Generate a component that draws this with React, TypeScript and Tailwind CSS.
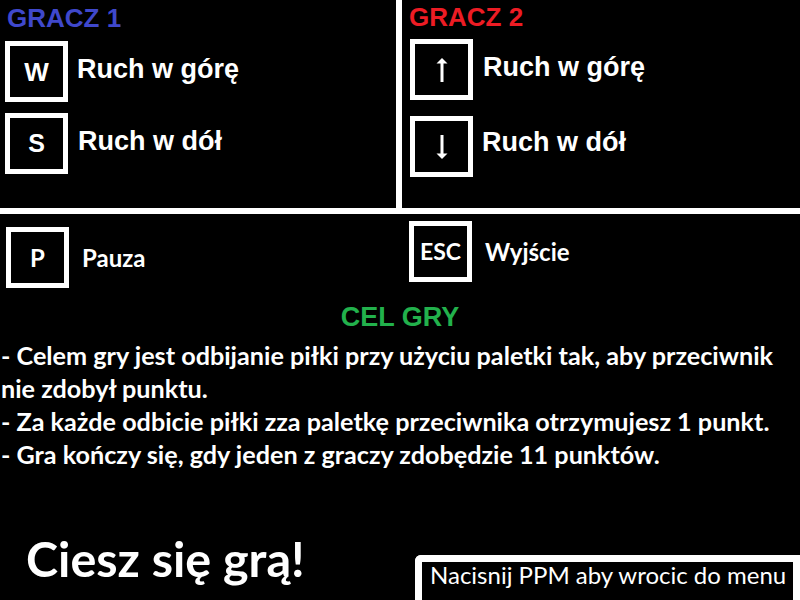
import React from 'react';

const arial = "font-['Liberation_Sans',Arial,sans-serif] font-bold";
const calibri = "font-['Lato',sans-serif]";

function KeyBox({ children, className = '' }: { children: React.ReactNode; className?: string }) {
  return (
    <div
      className={`w-[63px] h-[61px] border-[5px] border-white flex items-center justify-center shrink-0 ${className}`}
    >
      {children}
    </div>
  );
}

function ArrowUp() {
  return (
    <svg width="14" height="24" viewBox="0 0 14 24">
      <rect x="5.5" y="4" width="3" height="20" fill="#fff" />
      <polygon points="7,0 12.5,5.5 1.5,5.5" fill="#fff" />
    </svg>
  );
}

function ArrowDown() {
  return (
    <svg width="14" height="24" viewBox="0 0 14 24">
      <rect x="5.5" y="0" width="3" height="20" fill="#fff" />
      <polygon points="7,24 12.5,18.5 1.5,18.5" fill="#fff" />
    </svg>
  );
}

export default function App() {
  return (
    <div className="w-[800px] h-[600px] bg-black text-white overflow-hidden flex flex-col">
      {/* gracze */}
      <div className="flex h-[208px] shrink-0">
        <div className="w-[396px]">
          <div className={`${arial} text-[26px] leading-none text-[#3f48cc] mt-[5px] ml-[7px]`}>GRACZ 1</div>
          <div className="flex items-center mt-[10px] ml-[5px]">
            <KeyBox>
              <span className={`${arial} text-[26px] leading-none`}>W</span>
            </KeyBox>
            <span className={`${arial} text-[27px] leading-none ml-[9px] mb-1`}>Ruch w górę</span>
          </div>
          <div className="flex items-center mt-[11px] ml-[5px]">
            <KeyBox>
              <span className={`${arial} text-[25px] leading-none`}>S</span>
            </KeyBox>
            <span className={`${arial} text-[27px] leading-none ml-[10px] mb-1`}>Ruch w dół</span>
          </div>
        </div>
        <div className="w-[6px] bg-white" />
        <div className="flex-1">
          <div className={`${arial} text-[26px] leading-none text-[#ed1c24] mt-[4px] ml-[7px]`}>GRACZ 2</div>
          <div className="flex items-center mt-[9px] ml-[8px]">
            <KeyBox>
              <ArrowUp />
            </KeyBox>
            <span className={`${arial} text-[27px] leading-none ml-[10px] mb-1`}>Ruch w górę</span>
          </div>
          <div className="flex items-center mt-[16px] ml-[8px]">
            <KeyBox>
              <ArrowDown />
            </KeyBox>
            <span className={`${arial} text-[27px] leading-none ml-[9px] mb-[8px]`}>Ruch w dół</span>
          </div>
        </div>
      </div>
      <div className="h-[6px] bg-white shrink-0" />

      {/* pauza / wyjscie */}
      <div className="flex shrink-0">
        <div className="w-[402px] flex items-center mt-[13px] ml-[6px]">
          <KeyBox>
            <span className={`${calibri} font-bold text-[24px] leading-none`}>P</span>
          </KeyBox>
          <span className={`${calibri} font-bold text-[24px] leading-none ml-[13px]`}>Pauza</span>
        </div>
        <div className="flex items-center self-start mt-[7px] ml-[1px]">
          <KeyBox>
            <span className={`${calibri} font-bold text-[23px] leading-none`}>ESC</span>
          </KeyBox>
          <span className={`${calibri} font-bold text-[24px] leading-none ml-[13px]`}>Wyjście</span>
        </div>
      </div>

      {/* cel gry */}
      <div className={`${arial} text-[27px] leading-none text-[#22b14c] text-center mt-[16px]`}>CEL GRY</div>
      <p className={`${calibri} font-bold text-[25.2px] leading-[33px] mt-[8px] px-[1px]`}>
        - Celem gry jest odbijanie piłki przy użyciu paletki tak, aby przeciwnik
        <br />
        nie zdobył punktu.
        <br />- Za każde odbicie piłki zza paletkę przeciwnika otrzymujesz 1 punkt.
        <br />- Gra kończy się, gdy jeden z graczy zdobędzie 11 punktów.
      </p>

      {/* dol */}
      <div className="mt-auto flex items-end">
        <div className={`${calibri} font-bold text-[48.5px] leading-none ml-[26px] mb-[18px]`}>Ciesz się grą!</div>
        <div className="ml-auto w-[385px] h-[45px] border-t-[7px] border-x-[7px] border-white rounded-tl-[6px] pl-[8px] pt-[1px]">
          <span className={`${calibri} text-[24px] leading-none whitespace-nowrap`}>Nacisnij PPM aby wrocic do menu</span>
        </div>
      </div>
    </div>
  );
}
